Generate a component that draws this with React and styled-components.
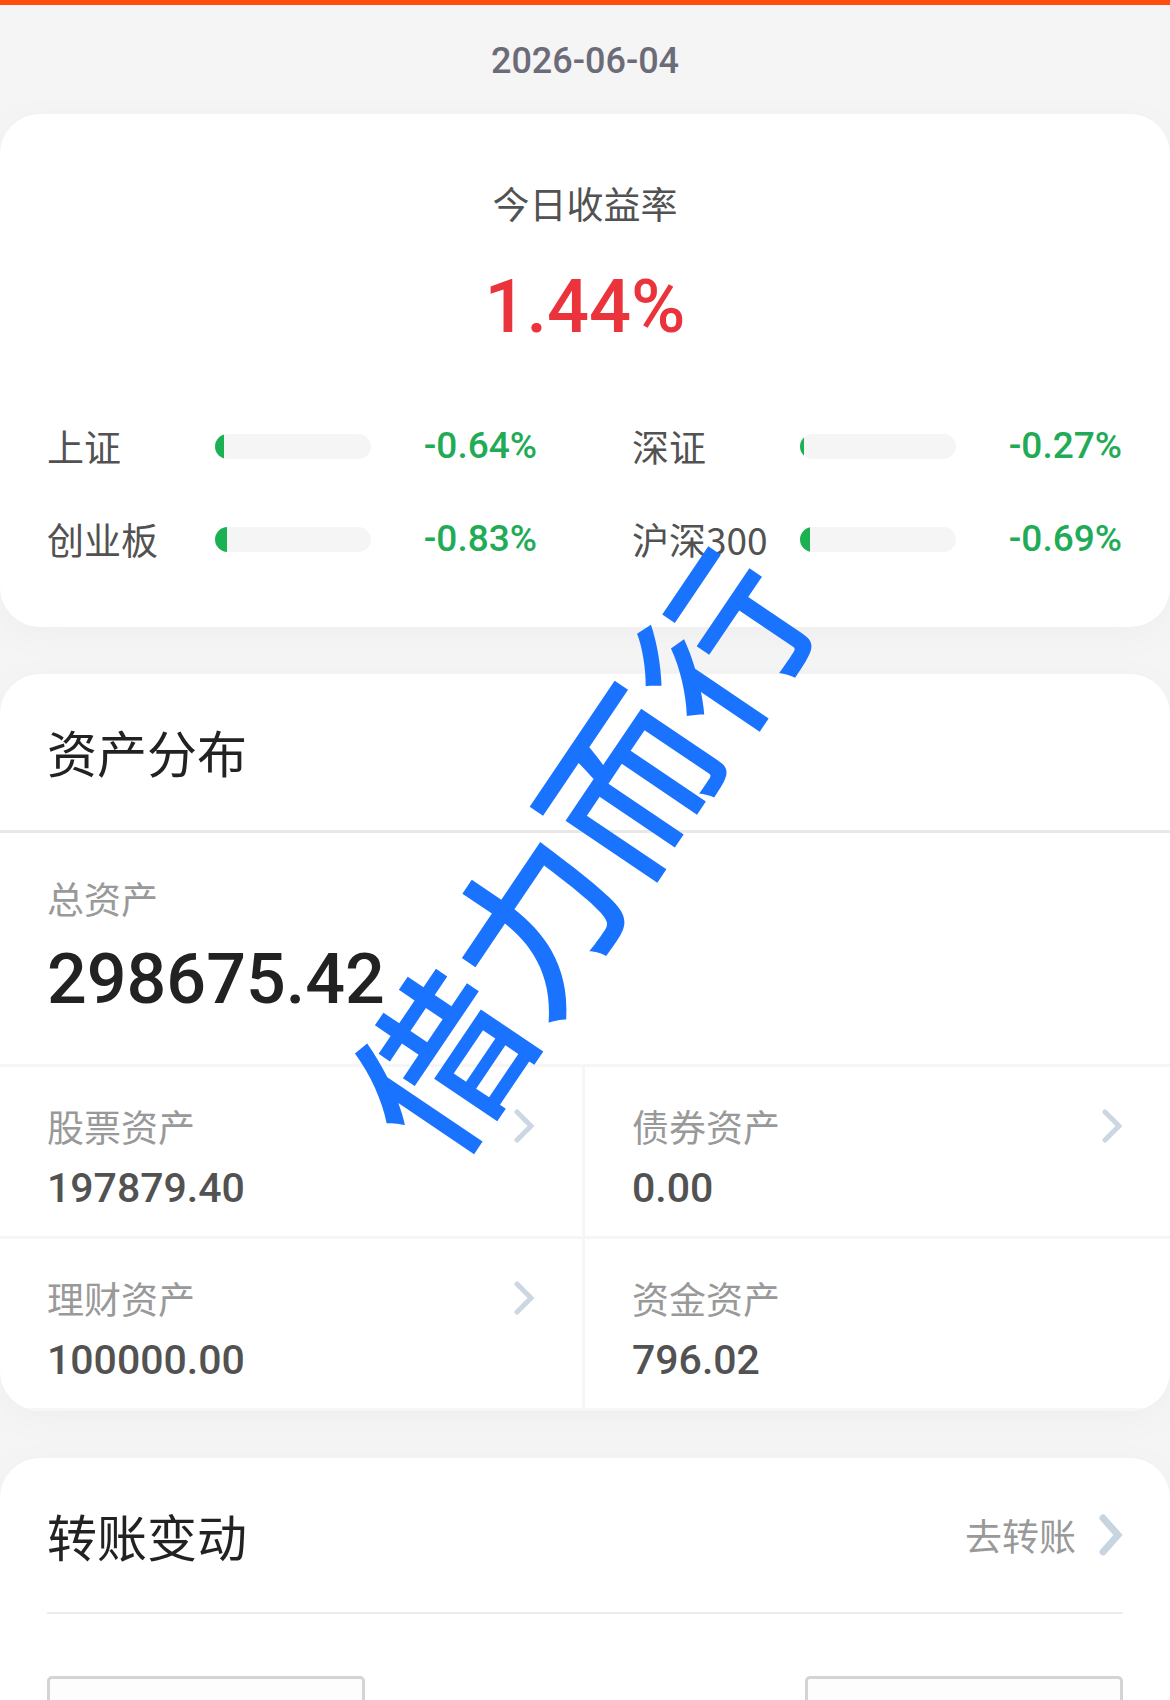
import React from "react";
import styled, { createGlobalStyle } from "styled-components";

const indexes = [
  { name: "上证", change: -0.64 },
  { name: "深证", change: -0.27 },
  { name: "创业板", change: -0.83 },
  { name: "沪深300", change: -0.69 },
];

const assets = [
  { name: "股票资产", value: "197879.40", link: true },
  { name: "债券资产", value: "0.00", link: true },
  { name: "理财资产", value: "100000.00", link: true },
  { name: "资金资产", value: "796.02", link: false },
];

function Chevron({ large }) {
  return large ? (
    <svg width="24" height="42" viewBox="0 0 24 42" aria-hidden="true">
      <path d="M4 4L19 21L4 38" />
    </svg>
  ) : (
    <svg width="20" height="34" viewBox="0 0 20 34" aria-hidden="true">
      <path d="M3 3L17 17L3 31" />
    </svg>
  );
}

function IndexItem({ data }) {
  return (
    <IndexRow>
      <IndexName>{data.name}</IndexName>
      <Track>
        <Fill style={{ width: `${Math.abs(data.change) * 9}%` }} />
      </Track>
      <Change>{data.change.toFixed(2)}%</Change>
    </IndexRow>
  );
}

function Asset({ data }) {
  return (
    <AssetCell as={data.link ? "a" : "div"} href={data.link ? "#" : undefined}>
      <AssetTop>
        <Label>{data.name}</Label>
        {data.link && <Chevron />}
      </AssetTop>
      <AssetValue>{data.value}</AssetValue>
    </AssetCell>
  );
}

function App() {
  return (
    <Page>
      <GlobalStyle />
      <DateBar>2026-06-04</DateBar>

      <Cards>
        <Card>
          <Today>
            <TodayLabel>今日收益率</TodayLabel>
            <TodayRate>1.44%</TodayRate>
          </Today>
          <IndexGrid>
            {indexes.map((item) => (
              <IndexItem key={item.name} data={item} />
            ))}
          </IndexGrid>
        </Card>

        <Card>
          <CardHeader>
            <Title>资产分布</Title>
          </CardHeader>
          <Total>
            <Label>总资产</Label>
            <TotalValue>298675.42</TotalValue>
          </Total>
          <AssetGrid>
            {assets.map((item) => (
              <Asset key={item.name} data={item} />
            ))}
          </AssetGrid>
        </Card>

        <Card>
          <TransferHeader>
            <Title>转账变动</Title>
            <MoreLink href="#">
              去转账
              <Chevron large />
            </MoreLink>
          </TransferHeader>
          <Filters>
            <DateInput type="text" aria-label="开始日期" />
            <DateInput type="text" aria-label="结束日期" />
          </Filters>
        </Card>
      </Cards>

      <Watermark>借力而行</Watermark>
    </Page>
  );
}

const numberFont = `Roboto, "Noto Sans CJK SC", sans-serif`;

const GlobalStyle = createGlobalStyle`
  * {
    box-sizing: border-box;
  }
  body {
    margin: 0;
    background-color: #f5f5f5;
    font-family: "Noto Sans CJK SC", sans-serif;
    color: #525252;
  }
  h2, p {
    margin: 0;
    font-weight: 400;
  }
  a {
    color: inherit;
    text-decoration: none;
  }
`;

const Page = styled.main`
  position: relative;
  height: 100vh;
  overflow: hidden;
  border-top: 5px solid #ff4e10;
`;
const DateBar = styled.p`
  padding: 32px 0 29px;
  text-align: center;
  font-family: ${numberFont};
  font-size: 36px;
  line-height: 48px;
  && {
    font-weight: 500;
  }
  color: #6c6c78;
`;
const Cards = styled.div`
  display: flex;
  flex-direction: column;
  gap: 47px;
`;
const Card = styled.section`
  overflow: hidden;
  border-radius: 40px;
  background-color: #fff;
  box-shadow: 0 8px 40px rgba(0, 0, 0, 0.03);
`;

const Today = styled.div`
  display: flex;
  flex-direction: column;
  align-items: center;
  padding-top: 65px;
`;
const TodayLabel = styled.p`
  font-size: 37px;
  line-height: 48px;
`;
const TodayRate = styled.p`
  margin-top: 36px;
  font-family: ${numberFont};
  font-size: 74px;
  line-height: 88px;
  color: #eb333b;
  && {
    font-weight: 500;
  }
`;
const IndexGrid = styled.div`
  display: grid;
  grid-template-columns: 1fr 1fr;
  row-gap: 45px;
  padding: 71px 0 64px;
`;
const IndexRow = styled.div`
  display: grid;
  grid-template-columns: 168px 1fr 166px;
  align-items: center;
  padding: 0 48px 0 47px;
  height: 48px;
  font-size: 37px;
  line-height: 48px;
`;
const IndexName = styled.span`
  white-space: nowrap;
`;
const Track = styled.div`
  overflow: hidden;
  height: 25px;
  border-radius: 13px;
  background-color: #f5f5f5;
`;
const Fill = styled.div`
  height: 100%;
  background-color: #1bb152;
`;
const Change = styled.span`
  text-align: right;
  font-family: ${numberFont};
  font-weight: 500;
  color: #22ab57;
`;

const CardHeader = styled.header`
  padding: 45px 47px 47px;
  border-bottom: 3px solid #e8e8e8;
`;
const Title = styled.h2`
  font-size: 50px;
  line-height: 64px;
  color: #222;
`;
const Label = styled.span`
  font-size: 37px;
  line-height: 48px;
  color: #999;
`;
const Total = styled.div`
  display: flex;
  flex-direction: column;
  padding: 41px 47px;
`;
const TotalValue = styled.strong`
  margin-top: 13px;
  font-family: ${numberFont};
  font-size: 70px;
  line-height: 88px;
  font-weight: 500;
  color: #222;
`;
const AssetGrid = styled.div`
  display: grid;
  grid-template-columns: 1fr 1fr;
  border-top: 3px solid #f6f6f6;
`;
const AssetCell = styled.div`
  padding: 35px 48px 24px 47px;
  border-bottom: 3px solid #f6f6f6;
  &:nth-child(odd) {
    border-right: 3px solid #f6f6f6;
  }
`;
const AssetTop = styled.div`
  display: flex;
  justify-content: space-between;
  align-items: center;
  svg {
    fill: none;
    stroke: #ccd7e3;
    stroke-width: 5;
    stroke-linecap: round;
  }
`;
const AssetValue = styled.div`
  margin-top: 14px;
  font-family: ${numberFont};
  font-size: 41px;
  line-height: 48px;
  font-weight: 500;
`;

const TransferHeader = styled.header`
  display: flex;
  justify-content: space-between;
  align-items: center;
  margin: 0 47px;
  padding: 45px 0;
  border-bottom: 2px solid #ececec;
`;
const MoreLink = styled.a`
  display: flex;
  align-items: center;
  gap: 23px;
  font-size: 37px;
  line-height: 48px;
  && {
    color: #999;
  }
  svg {
    fill: none;
    stroke: #c8d5e0;
    stroke-width: 7;
    stroke-linecap: round;
  }
`;
const Filters = styled.div`
  display: flex;
  justify-content: space-between;
  padding: 62px 47px;
`;
const DateInput = styled.input`
  width: 318px;
  height: 90px;
  border: 3px solid #d4d4d4;
  border-radius: 5px;
  background-color: #fdfdfd;
  font-size: 37px;
`;

const Watermark = styled.div`
  position: absolute;
  top: 852px;
  left: calc(50% + 4px);
  transform: translate(-50%, -50%) rotate(-56deg);
  font-family: ${numberFont};
  font-size: 168px;
  line-height: 1;
  font-weight: 500;
  white-space: nowrap;
  color: #1a73ff;
  pointer-events: none;
`;

export default App;
